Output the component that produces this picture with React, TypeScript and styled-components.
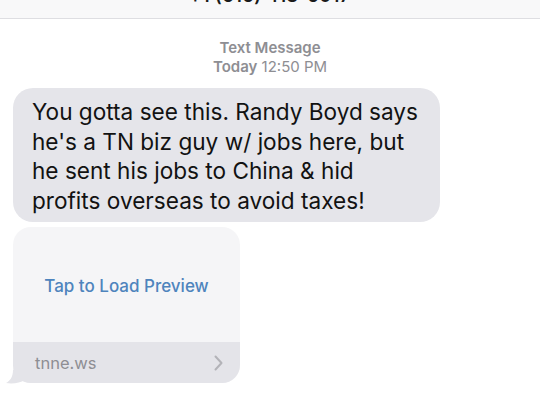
import styled, { createGlobalStyle } from 'styled-components'

const GlobalStyle = createGlobalStyle`
  html, body {
    margin: 0;
    padding: 0;
    background: #ffffff;
    font-family: Inter, "Liberation Sans", Arial, sans-serif;
  }
`

const Screen = styled.div`
  width: 540px;
  height: 405px;
  overflow: hidden;
  background: #ffffff;
  display: flex;
  flex-direction: column;
`

const TopBar = styled.div`
  height: 18px;
  flex: 0 0 18px;
  background: #f8f8f9;
  border-bottom: 1px solid #dedee2;
  overflow: hidden;
  display: flex;
  justify-content: center;
  align-items: flex-end;
`

const TopTitle = styled.div`
  font-size: 18px;
  font-weight: 600;
  color: #1a1a1a;
  line-height: 20px;
  margin-bottom: 12px;
  letter-spacing: 0.5px;
`

const Stamp = styled.div`
  margin-top: 19px;
  text-align: center;
  font-size: 15px;
  line-height: 19px;
  color: #8e8e93;
`

const StampBold = styled.span`
  font-weight: 600;
`

const Thread = styled.div`
  display: flex;
  flex-direction: column;
  align-items: flex-start;
  gap: 5px;
  padding: 12px 0 0 13px;
`

const Bubble = styled.div`
  width: 427px;
  box-sizing: border-box;
  background: #e5e5ea;
  border-radius: 20px;
  padding: 9px 18px 7px 19px;
  font-size: 22.6px;
  line-height: 29.5px;
  color: #121212;
`

const LinkCard = styled.div`
  position: relative;
  width: 227px;
  height: 156px;
  border-radius: 18px;
  background: #f5f5f7;
  display: flex;
  flex-direction: column;
`

const Preview = styled.div`
  flex: 1;
  display: flex;
  align-items: center;
  justify-content: center;
  padding-top: 2px;
  font-size: 17px;
  color: #4e84bd;
  font-weight: 500;
`

const LinkFooter = styled.div`
  height: 41px;
  flex: 0 0 41px;
  background: #e4e4e9;
  border-radius: 0 0 18px 18px;
  display: flex;
  align-items: center;
  justify-content: space-between;
  padding: 0 17px 0 22px;
  font-size: 16.5px;
  color: #8e8e93;
`

const Tail = styled.svg`
  position: absolute;
  left: -8px;
  bottom: -1px;
`

export default function App() {
  return (
    <Screen>
      <GlobalStyle />
      <TopBar>
        <TopTitle>+1 (615) 418-5017</TopTitle>
      </TopBar>
      <Stamp>
        <StampBold>Text Message</StampBold>
        <br />
        <StampBold>Today</StampBold> 12:50 PM
      </Stamp>
      <Thread>
        <Bubble>
          You gotta see this. Randy Boyd says he's a TN biz guy w/ jobs here, but he sent his jobs to China &amp; hid
          profits overseas to avoid taxes!
        </Bubble>
        <LinkCard>
          <Preview>Tap to Load Preview</Preview>
          <LinkFooter>
            <span>tnne.ws</span>
            <svg width="9" height="16" viewBox="0 0 9 16">
              <path d="M1.5 1.5 L7.5 8 L1.5 14.5" fill="none" stroke="#b3b3b8" strokeWidth="2" strokeLinecap="round" strokeLinejoin="round" />
            </svg>
          </LinkFooter>
          <Tail width="20" height="20" viewBox="0 0 20 20">
            <path d="M20 0 L20 16 C15 19 8 20 1 19 C5 17 8 13 8 6 Z" fill="#e4e4e9" />
          </Tail>
        </LinkCard>
      </Thread>
    </Screen>
  )
}
